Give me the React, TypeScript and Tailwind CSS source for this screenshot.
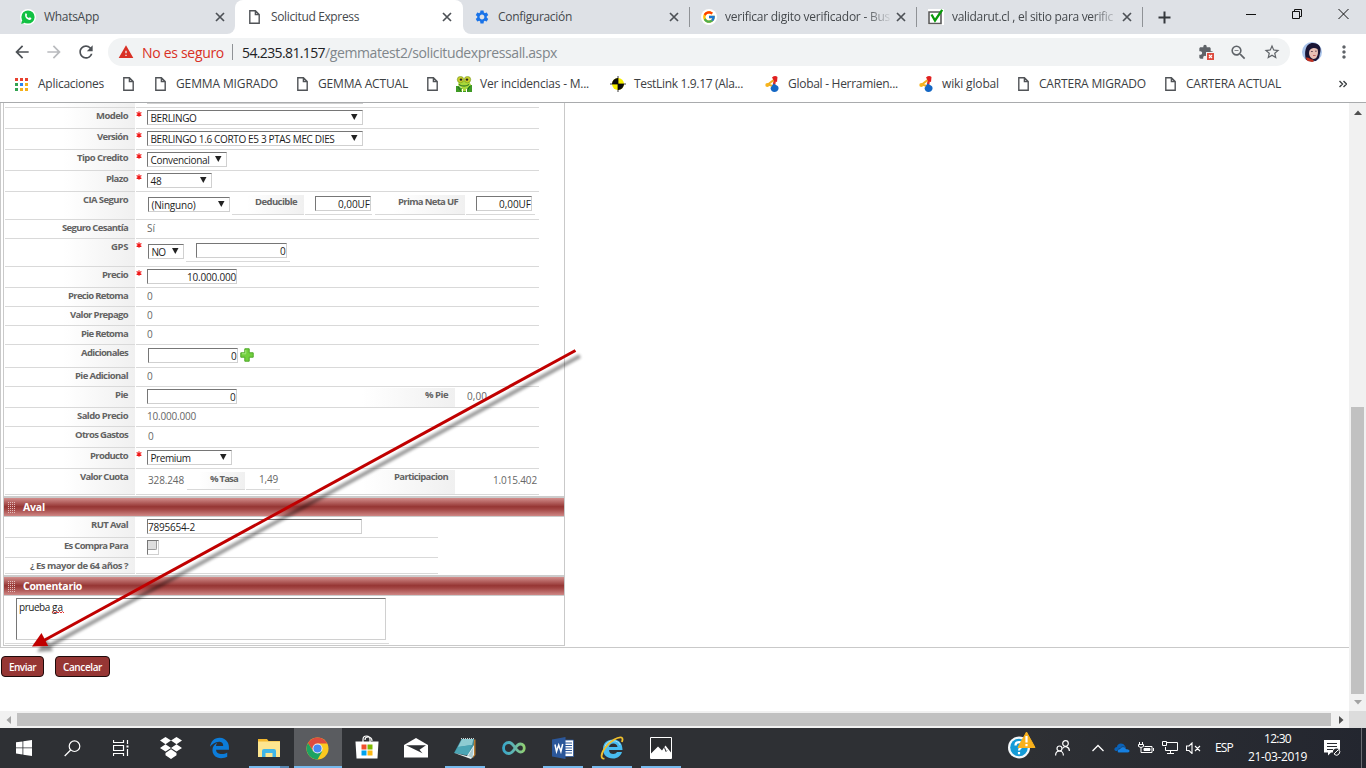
import React, { useLayoutEffect, useRef, useState } from 'react';
import { FcGoogle } from 'react-icons/fc';
import { FaEdgeLegacy } from 'react-icons/fa';
import {
  MdSettings,
  MdArrowBack,
  MdArrowForward,
  MdRefresh,
  MdWarning,
  MdExtension,
  MdZoomOut,
  MdStarBorder,
  MdMoreVert,
} from 'react-icons/md';

/* Text whose letter spacing is adjusted so that it takes up w pixels. */
function Fit({ w, className = '', children }: { w: number; className?: string; children: string }) {
  const ref = useRef<HTMLSpanElement>(null);
  const [spacing, setSpacing] = useState(0);
  useLayoutEffect(() => {
    const el = ref.current;
    if (!el) return;
    const natural = el.getBoundingClientRect().width;
    setSpacing((w - natural) / children.length);
  }, []);
  return (
    <span ref={ref} className={`inline-block shrink-0 whitespace-pre ${className}`} style={{ letterSpacing: `${spacing}px` }}>
      {children}
    </span>
  );
}

/* ---------- browser chrome ---------- */

const PageIcon = ({ className = '' }: { className?: string }) => (
  <svg viewBox="0 0 11 14" className={`h-[14px] w-[11px] shrink-0 ${className}`} fill="none" stroke="#505357" strokeWidth="1.4">
    <path d="M.8.7h5.6l3.8 3.8v8.8H.8zM6.4.7v3.8h3.8" />
  </svg>
);

const WhatsIcon = () => (
  <span className="flex h-4 w-4 items-center justify-center rounded-full bg-white">
    <svg viewBox="0 0 14 14" className="h-[14px] w-[14px]">
      <path fill="#12c143" d="m.2 14 1-4 2.800 2.800z" />
      <circle cx="7" cy="7" r="6.600" fill="#12c143" />
      <path fill="#fff" d="M4.300 3.600q.8-.7 1.300.2l.5 1.200-.6.900q.8 1.500 2.400 2.200l.8-.8 1.700.8q.2 1.600-1.500 1.900C6 10.200 3.300 7 4.300 3.600z" />
    </svg>
  </span>
);

const CheckIcon = () => (
  <svg viewBox="0 0 16 16" className="h-4 w-4">
    <path fill="#fff" d="M0 0h16v16H0z" />
    <path fill="none" stroke="#5a5a5a" strokeWidth="1.600" d="M1 3h12v11.500H1z" />
    <path fill="none" stroke="#0a9a0a" strokeWidth="2.300" d="M3.500 5.500 7 11.500 14.200.8" />
  </svg>
);

const CloseIcon = () => (
  <svg viewBox="0 0 14 14" className="h-[14px] w-[14px] shrink-0" fill="none" stroke="#4d5156" strokeWidth="1.700">
    <path d="m3 3 8 8M11 3l-8 8" />
  </svg>
);

function Tab({ icon, title, w, fade, className }: { icon: React.ReactNode; title: string; w: number; fade?: boolean; className: string }) {
  return (
    <div className={`flex h-[34px] shrink-0 items-center ${className}`}>
      <div className="flex w-6 shrink-0 items-center">{icon}</div>
      <div
        className={`flex-1 whitespace-nowrap text-[12px] leading-4 text-[#45494d] ${
          fade ? '[mask-image:linear-gradient(to_right,black_140px,transparent_168px)]' : ''
        }`}
      >
        <Fit w={w}>{title}</Fit>
      </div>
      <CloseIcon />
    </div>
  );
}

const WindowButtons = () => (
  <div className="ml-auto flex items-center self-start pt-[8px] pr-[17px]">
    <svg viewBox="0 0 104 12" className="h-3 w-[104px]" fill="none" stroke="#111" strokeWidth="1">
      <path d="M1 6.500h10M47.500 3.500h7v7h-7zM49.500 3.500v-2h7v7h-2M93.500 1l10 10M103.500 1l-10 10" />
    </svg>
  </div>
);

function TabStrip() {
  return (
    <div className="flex h-[34px] shrink-0 items-center bg-[#dee1e6]">
      <div className="h-[34px] w-[235px] bg-white">
        <Tab icon={<WhatsIcon />} title="WhatsApp" w={55} className="w-[235px] rounded-br-[8px] bg-[#dee1e6] pl-5 pr-[8px]" />
      </div>
      <div className="h-[34px] w-[228px] bg-[#dee1e6]">
        <div className="h-[34px] w-[228px] rounded-t-[8px] bg-white">
          <Tab icon={<PageIcon />} title="Solicitud Express" w={88} className="w-[228px] pl-[14px] pr-[9px] [&>div:first-child]:w-[22px]" />
        </div>
      </div>
      <div className="h-[34px] w-[226px] bg-white">
        <Tab icon={<MdSettings className="h-4 w-4 text-[#1a73e8]" />} title="Configuración" w={74} className="w-[226px] rounded-bl-[8px] bg-[#dee1e6] pl-[11px] pr-[8px]" />
      </div>
      <div className="h-5 w-px bg-[#8f9296]" />
      <Tab
        icon={
          <span className="flex h-4 w-4 items-center justify-center rounded-full bg-white">
            <FcGoogle className="h-[14px] w-[14px]" />
          </span>
        }
        title="verificar digito verificador - Bus"
        w={165}
        fade
        className="w-[226px] pl-[11px] pr-[8px]"
      />
      <div className="h-5 w-px bg-[#8f9296]" />
      <Tab icon={<CheckIcon />} title="validarut.cl , el sitio para verific" w={161} fade className="w-[225px] pl-[11px] pr-[8px]" />
      <div className="h-5 w-px bg-[#8f9296]" />
      <svg viewBox="0 0 13 13" className="ml-[15px] h-[13px] w-[13px]" stroke="#34383c" strokeWidth="2">
        <path d="M6.500.5v12M.5 6.500h12" />
      </svg>
      <WindowButtons />
    </div>
  );
}

const Avatar = () => (
  <svg viewBox="0 0 20 20" className="h-5 w-5">
    <defs>
      <clipPath id="avatar">
        <circle cx="10" cy="10" r="10" />
      </clipPath>
    </defs>
    <g clipPath="url(#avatar)">
      <path fill="#a9c3ea" d="M0 0h20v20H0z" />
      <path fill="#1a1535" d="M4 18C2 11 3 1 11 1c6 0 8 4 7.500 8L17 16l-3 3z" />
      <path fill="#e8bfb4" d="M7.500 8.500C9 6 12 5 15.500 7c1 3 .5 6-1 8.500-2 2.500-5 1.500-6.500-1-1.200-2-1.200-4-.5-6z" />
      <path fill="#c2301f" d="M4 15.500c3-.5 4 2 7 2l1 2.500H5z" />
      <path fill="#b2444a" d="M11 13.300h2.600v.8H11z" />
      <path fill="#43293a" d="M9 9h1.800v.8H9zM13 8.800h1.700v.8H13z" />
    </g>
  </svg>
);

function Toolbar() {
  return (
    <div className="flex h-[36px] shrink-0 items-center bg-white">
      <MdArrowBack className="ml-[12px] h-5 w-5 text-[#4d5156]" />
      <MdArrowForward className="ml-[12px] h-5 w-5 text-[#b9bbbe]" />
      <MdRefresh className="ml-[12px] h-5 w-5 text-[#4d5156]" />
      <div className="ml-[12px] flex h-7 w-[1182px] items-center rounded-full bg-[#f1f3f4] pl-[10px] text-[14px]">
        <MdWarning className="h-4 w-4 text-[#d93025]" />
        <Fit w={82} className="ml-[8px] text-[#d93025]">No es seguro</Fit>
        <div className="ml-[8px] mr-[9px] h-4 w-px bg-[#8f9296]" />
        <Fit w={83} className="text-[#202124]">54.235.81.157</Fit>
        <Fit w={232} className="text-[#80868b]">/gemmatest2/solicitudexpressall.aspx</Fit>
        <div className="ml-auto mr-[9px] flex items-center gap-[15px]">
          <div className="relative h-4 w-4">
            <MdExtension className="h-4 w-4 text-[#5f6368]" />
            <svg viewBox="0 0 9 9" className="absolute left-[8px] top-[8px] h-[9px] w-[9px]">
              <path fill="#f1f3f4" d="M0 0h9v9H0z" />
              <path fill="#dd4b3e" d="M1 1h7v7H1z" />
              <path stroke="#fff" strokeWidth="1.100" d="m3 3 3 3M6 3 3 6" />
            </svg>
          </div>
          <MdZoomOut className="h-[19px] w-[19px] text-[#5f6368]" />
          <MdStarBorder className="h-[18px] w-[18px] text-[#5f6368]" />
        </div>
      </div>
      <div className="ml-[12px]"><Avatar /></div>
      <MdMoreVert className="ml-[12px] h-5 w-5 text-[#5f6368]" />
    </div>
  );
}

const AppsIcon = () => (
  <svg viewBox="0 0 13 13" className="h-[13px] w-[13px]">
    <path fill="#e8412f" d="M0 0h3v3H0zM5 0h3v3H5zM10 0h3v3h-3z" />
    <path fill="#33a352" d="M0 5h3v3H0zM0 10h3v3H0z" />
    <path fill="#2a83f0" d="M5 5h3v3H5z" />
    <path fill="#f5b01a" d="M10 5h3v3h-3zM5 10h3v3H5zM10 10h3v3h-3z" />
  </svg>
);

const FrogIcon = () => (
  <svg viewBox="0 0 16 16" className="h-4 w-4">
    <path fill="#3f9a26" d="M0 10h3l2 2h6l2-3h3v7H0z" />
    <path fill="#a9d83a" d="M3 5h10l2 4-4 3 1 3H5l1-3-4-3z" />
    <circle cx="4.500" cy="3.600" r="3.200" fill="#c9cc2a" stroke="#6f9a20" strokeWidth=".6" />
    <circle cx="11.500" cy="3.600" r="3.200" fill="#c9cc2a" stroke="#6f9a20" strokeWidth=".6" />
    <circle cx="5" cy="3.600" r="1.200" fill="#222" />
    <circle cx="11" cy="3.600" r="1.200" fill="#222" />
    <path stroke="#1d6a22" fill="none" d="M3 8.500c3 2 7 2 10 0M2 11l3 4M14 10l-3 5" />
    <path fill="#fff" d="M6 13h1v3H6zM10 13h1v3h-1z" />
  </svg>
);

const TestLinkIcon = () => (
  <svg viewBox="0 0 16 16" className="h-4 w-4">
    <circle cx="8" cy="8" r="6" fill="#f6ef00" />
    <path fill="#0b0b0b" d="M8 8V2a6 6 0 0 0-6 6zM8 8v6a6 6 0 0 0 6-6z" />
    <path stroke="#0b0b0b" strokeWidth=".8" d="M8 0v16M0 8h16" />
  </svg>
);

const GlobalIcon = () => (
  <svg viewBox="0 0 14 16" className="h-4 w-[14px]">
    <path fill="none" stroke="#e03020" strokeWidth="2.500" d="m10 3-1 6" />
    <path fill="none" stroke="#f0b020" strokeWidth="2" d="M10 3 3 8.500l6 2" />
    <path fill="#e02020" d="M7 1.500Q10-1 12.500 1L12 6 9 5z" />
    <circle cx="2.300" cy="9" r="2" fill="#f7b51e" />
    <path fill="#1467c4" d="M8.500 7.500 11 9q3 1 2.500 4-1 3-4 3-3.500 0-4-4z" />
  </svg>
);

function Bookmarks() {
  return (
    <div className="flex h-[33px] shrink-0 items-center border-b border-[#a9abad] bg-white pb-[4px] text-[12px] leading-4 text-[#3c4043]">
      <div className="ml-[15px]"><AppsIcon /></div>
      <Fit w={66} className="ml-[10px]">Aplicaciones</Fit>
      <PageIcon className="ml-[19px]" />
      <PageIcon className="ml-[21px]" />
      <Fit w={102} className="ml-[10px]">GEMMA MIGRADO</Fit>
      <PageIcon className="ml-[19px]" />
      <Fit w={90} className="ml-[10px]">GEMMA ACTUAL</Fit>
      <PageIcon className="ml-[19px]" />
      <div className="ml-[18px]"><FrogIcon /></div>
      <Fit w={109} className="ml-[8px]">Ver incidencias - M...</Fit>
      <div className="ml-[21px]"><TestLinkIcon /></div>
      <Fit w={109} className="ml-[8px]">TestLink 1.9.17 (Ala...</Fit>
      <div className="ml-[22px]"><GlobalIcon /></div>
      <Fit w={110} className="ml-[9px]">Global - Herramien...</Fit>
      <div className="ml-[21px]"><GlobalIcon /></div>
      <Fit w={57} className="ml-[9px]">wiki global</Fit>
      <PageIcon className="ml-[19px]" />
      <Fit w={107} className="ml-[10px]">CARTERA MIGRADO</Fit>
      <PageIcon className="ml-[19px]" />
      <Fit w={95} className="ml-[10px]">CARTERA ACTUAL</Fit>
      <svg viewBox="0 0 8 8" className="ml-auto mr-[19px] h-2 w-2" fill="none" stroke="#3c4043" strokeWidth="1.400">
        <path d="m.5 1 3 3-3 3M4.500 1l3 3-3 3" />
      </svg>
    </div>
  );
}

/* ---------- form ---------- */

const Required = () => (
  <svg viewBox="0 0 6 6" className="mt-[3px] h-[6px] w-[6px] shrink-0" stroke="#f01818" strokeWidth="1.100">
    <path d="M3 .3v5.400M.6 1.600l4.800 2.800M5.400 1.600.6 4.400" />
  </svg>
);

function Row({ label, lw, h, required, children, lineW = 'w-[403px]' }: {
  label: string; lw: number; h: string; required?: boolean; children?: React.ReactNode; lineW?: string;
}) {
  return (
    <div className={`ml-px flex shrink-0 gap-px ${h}`}>
      <div className="w-[130px] border-b border-[#d9d9d9] bg-[linear-gradient(to_right,#fff_45%,#f0f0f0)] pr-[7px] text-right text-[9.5px] font-bold leading-[16px] text-[#636363]">
        <Fit w={lw}>{label}</Fit>
      </div>
      <div className={`flex items-start border-b border-[#d9d9d9] text-[#666] ${lineW}`}>
        <div className="w-[11px] shrink-0">{required && <Required />}</div>
        {children}
      </div>
    </div>
  );
}

const inset = 'border border-t-[#767676] border-l-[#767676] border-b-[#d0d0d0] border-r-[#d0d0d0] bg-white';

function Select({ text, w, className }: { text: string; w: number; className: string }) {
  return (
    <div className={`flex h-[15px] shrink-0 items-center justify-between pl-[2.5px] pr-[4px] leading-[13px] text-[#1c1c1c] ${inset} ${className}`}>
      <Fit w={w} className="pt-px">{text}</Fit>
      <svg viewBox="0 0 8 8" className="-mt-px h-2 w-2 shrink-0" fill="#222">
        <path d="M1 1h6.500L4.300 7z" />
      </svg>
    </div>
  );
}

function Input({ text, w, className, left }: { text: string; w: number; className: string; left?: boolean }) {
  return (
    <div className={`flex h-[15px] shrink-0 items-center leading-[13px] text-[#1c1c1c] ${left ? '' : 'justify-end'} ${inset} ${className}`}>
      <Fit w={w} className="pt-px">{text}</Fit>
    </div>
  );
}

function SubLabel({ text, w, className }: { text: string; w: number; className: string }) {
  return (
    <div className={`shrink-0 border-b border-[#d9d9d9] bg-[linear-gradient(to_right,#fff_20%,#f0f0f0)] pr-[7px] text-right text-[9.5px] font-bold text-[#636363] ${className}`}>
      <Fit w={w}>{text}</Fit>
    </div>
  );
}

const Value = ({ text, w, className = 'leading-[17px]' }: { text: string; w: number; className?: string }) => (
  <Fit w={w} className={className}>{text}</Fit>
);

function SectionHeader({ title, w }: { title: string; w: number }) {
  return (
    <div className="flex h-[21px] shrink-0 items-center border-t-2 border-b border-[#cccccc] bg-[linear-gradient(to_bottom,#d28e8c,#963634_48%,#a24543_62%,#cf8785)] pl-[4px]">
      <svg viewBox="0 0 8 11" className="h-[11px] w-2" fill="#e3bdbc">
        {[0, 2, 4, 6].map((x) => [0, 2, 4, 6, 8, 10].map((y) => <rect key={`${x}-${y}`} x={x} y={y} width="1" height="1" />))}
      </svg>
      <Fit w={w} className="ml-[7px] -mt-px text-[10.500px] font-bold leading-4 text-white">{title}</Fit>
    </div>
  );
}

const Plus = () => (
  <svg viewBox="0 0 14 14" className="mt-[3px] ml-[2px] h-[14px] w-[14px] shrink-0">
    <path fill="#72d03e" stroke="#4fa82a" d="M4.800.8h4.400v4h4v4.400h-4v4H4.800v-4h-4V4.800h4z" />
    <path fill="none" stroke="#a5e881" d="M5.800 5.500v-3.500M2 5.800h4" />
  </svg>
);

function FormPanel() {
  return (
    <div className="ml-[2px] flex h-[543px] w-[562px] flex-col border-b border-l border-r border-[#c9c9c9] text-[10px]">
      <div className="ml-px flex h-[5px] shrink-0 gap-px">
        <div className="w-[130px] border-b border-[#d9d9d9] bg-[linear-gradient(to_right,#fff_40%,#f0f0f0)]" />
        <div className="w-[403px] border-b border-[#d9d9d9] pl-[11px]">
          <div className="h-px w-[216px] bg-[#d0d0d0]" />
        </div>
      </div>
      <Row label="Modelo" lw={32} h="h-[21px]" required>
        <Select text="BERLINGO" w={46} className="mt-[2px] w-[216px]" />
      </Row>
      <Row label="Versión" lw={31} h="h-[21px]" required>
        <Select text="BERLINGO 1.6 CORTO E5 3 PTAS MEC DIES" w={184} className="mt-[2px] w-[216px]" />
      </Row>
      <Row label="Tipo Credito" lw={51} h="h-[21px]" required>
        <Select text="Convencional" w={59} className="mt-[2px] w-[80px]" />
      </Row>
      <Row label="Plazo" lw={22} h="h-[21px]" required>
        <Select text="48" w={11} className="mt-[2px] w-[65px]" />
      </Row>
      <Row label="CIA Seguro" lw={45} h="h-[28px]">
        <Select text="(Ninguno)" w={44} className="ml-px mt-[5px] w-[82px]" />
        <SubLabel text="Deducible" w={42} className="ml-[2px] mt-[3px] h-5 w-[72px] leading-[14px]" />
        <div className="ml-px mt-[3px] h-5 w-[67px] border-b border-[#d9d9d9] pl-[10px]">
          <Input text="0,00UF" w={32} className="mt-px w-[56px]" />
        </div>
        <SubLabel text="Prima Neta UF" w={60} className="ml-[3px] mt-[3px] h-5 w-[90px] leading-[14px]" />
        <div className="ml-px mt-[3px] h-5 w-[69px] border-b border-[#d9d9d9] pl-[10px]">
          <Input text="0,00UF" w={32} className="mt-px w-[56px]" />
        </div>
      </Row>
      <Row label="Seguro Cesantía" lw={66} h="h-[19px]">
        <Value text="Sí" w={8} />
      </Row>
      <Row label="GPS" lw={17} h="h-[28px]" required>
        <Select text="NO" w={14} className="ml-px mt-[5px] w-[36px]" />
        <div className="ml-[2px] mt-[3px] h-5 w-[104px] border-b border-[#d9d9d9] pl-[10px]">
          <Input text="0" w={6} className="mt-px w-[91px]" />
        </div>
      </Row>
      <Row label="Precio" lw={26} h="h-[21px]" required>
        <Input text="10.000.000" w={49} className="mt-[2px] w-[90px]" />
      </Row>
      <Row label="Precio Retoma" lw={60} h="h-[19px]"><Value text="0" w={6} /></Row>
      <Row label="Valor Prepago" lw={58} h="h-[19px]"><Value text="0" w={6} /></Row>
      <Row label="Pie Retoma" lw={47} h="h-[19px]"><Value text="0" w={6} /></Row>
      <Row label="Adicionales" lw={47} h="h-[23px]">
        <Input text="0" w={6} className="ml-px mt-[3px] w-[90px]" />
        <Plus />
      </Row>
      <Row label="Pie Adicional" lw={53} h="h-[19px]"><Value text="0" w={6} /></Row>
      <Row label="Pie" lw={13} h="h-[21px]">
        <Input text="0" w={6} className="mt-[2px] w-[90px]" />
        <SubLabel text="% Pie" w={23} className="ml-[102px] mt-px h-5 w-[116px] leading-[14px]" />
        <Value text="0,00" w={20} className="ml-[12px] leading-[18px]" />
      </Row>
      <Row label="Saldo Precio" lw={51} h="h-[19px]"><Value text="10.000.000" w={49} /></Row>
      <Row label="Otros Gastos" lw={53} h="h-[21px]"><Value text="0" w={6} className="ml-px leading-[19px]" /></Row>
      <Row label="Producto" lw={38} h="h-[21px]" required>
        <Select text="Premium" w={40} className="mt-[2px] w-[85px]" />
      </Row>
      <Row label="Valor Cuota" lw={48} h="h-[26px]">
        <Value text="328.248" w={36} className="ml-px leading-[23px]" />
        <SubLabel text="% Tasa" w={28} className="ml-[3px] mt-[3px] h-[18px] w-[58px] leading-[14px]" />
        <div className="ml-px mt-[3px] h-[18px] w-[34px] border-b border-[#d9d9d9] pl-[13px]">
          <Value text="1,49" w={19} className="leading-[15px]" />
        </div>
        <SubLabel text="Participacion" w={54} className="ml-[59px] mt-px h-[25px] w-[116px] leading-[14px]" />
        <Value text="1.015.402" w={44} className="ml-[38px] leading-[23px]" />
      </Row>
      <div className="h-px shrink-0" />
      <SectionHeader title="Aval" w={22} />
      <Row label="RUT Aval" lw={37} h="h-[21px]" lineW="w-[302px]">
        <Input text="7895654-2" w={47} left className="mt-[2px] w-[215px]" />
      </Row>
      <Row label="Es Compra Para" lw={64} h="h-[20px]" lineW="w-[302px]">
        <div className={`mt-[2px] h-[15px] w-3 ${inset}`}>
          <div className="h-[9px] w-[9px] rounded-br-[2px] border-b border-r border-[#9c9c9c] bg-[#dedede]" />
        </div>
      </Row>
      <Row label="¿ Es mayor de 64 años ?" lw={98} h="h-[16px]" lineW="w-[302px]" />
      <div className="h-px shrink-0" />
      <SectionHeader title="Comentario" w={59} />
      <div className="ml-px h-[48px] w-[384px] shrink-0 border-b border-[#d9d9d9] pl-[11px] pt-[2px]">
        <div className={`flex h-[42px] w-[370px] items-start pl-[2px] leading-[16px] text-[#1c1c1c] ${inset}`}>
          <Fit w={33}>prueba </Fit>
          <div className="relative">
            <Fit w={11}>ga</Fit>
            <svg viewBox="0 0 12 3" className="absolute left-0 top-[12px] h-[3px] w-3" fill="none" stroke="#e23030">
              <path d="m0 2 1.500-1.500L3 2 4.500.5 6 2 7.500.5 9 2l1.500-1.500L12 2" />
            </svg>
          </div>
        </div>
      </div>
    </div>
  );
}

const Button = ({ text, w, className }: { text: string; w: number; className: string }) => (
  <button className={`flex h-[21px] items-center justify-center rounded-[4px] border-[1.500px] border-[#1d0b0b] bg-[#963634] text-[10px] font-semibold leading-4 text-white ${className}`}>
    <Fit w={w}>{text}</Fit>
  </button>
);

const Arrow = () => (
  <svg viewBox="0 0 600 320" className="pointer-events-none absolute left-0 top-[340px] h-[320px] w-[600px]">
    <defs>
      <filter id="soft" x="-5%" y="-5%" width="110%" height="110%">
        <feGaussianBlur stdDeviation="1.700" />
      </filter>
    </defs>
    <g filter="url(#soft)" opacity=".4" transform="translate(5 5)">
      <path stroke="#000" strokeWidth="4" d="M575 11 44 301" />
      <path d="m32 307 9-14 7 13z" />
    </g>
    <path stroke="#c00000" strokeWidth="3" d="M575.500 10.500 42 301.500" />
    <path fill="#c00000" d="m32 306.500 9.500-13.500 6.700 13z" />
  </svg>
);

function Viewport() {
  return (
    <div className="flex h-[608px] shrink-0 bg-white">
      <div className="w-[1349px]">
        <div className="h-[545px] border-b border-l border-[#c9c9c9]">
          <FormPanel />
        </div>
        <div className="ml-px mt-[8px] flex gap-[11px]">
          <Button text="Enviar" w={27} className="w-[43px]" />
          <Button text="Cancelar" w={39} className="w-[55px]" />
        </div>
      </div>
      <div className="flex w-[17px] flex-col items-center bg-[#f1f1f1]">
        <svg viewBox="0 0 8 5" className="mt-[7px] h-[5px] w-2" fill="#505050"><path d="M0 5h8L4 .5z" /></svg>
        <div className="mt-[292px] h-[287px] w-[13px] bg-[#c1c1c1]" />
        <svg viewBox="0 0 8 5" className="mt-[6px] h-[5px] w-2" fill="#a3a3a3"><path d="M0 0h8L4 4.500z" /></svg>
      </div>
    </div>
  );
}

const HScroll = () => (
  <div className="flex h-[17px] shrink-0 bg-[#dcdcdc]">
    <div className="flex w-[1349px] items-center bg-[#f1f1f1]">
      <svg viewBox="0 0 5 8" className="ml-[6px] h-2 w-[5px]" fill="#a3a3a3"><path d="M5 0v8L.5 4z" /></svg>
      <div className="ml-[6px] h-[13px] w-[1314px] bg-[#c1c1c1]" />
      <svg viewBox="0 0 5 8" className="ml-[8px] h-2 w-[5px]" fill="#505050"><path d="M0 0v8l4.500-4z" /></svg>
    </div>
  </div>
);

/* ---------- taskbar ---------- */

function Task({ children, bar, active, className = 'w-[49px]' }: { children: React.ReactNode; bar?: string; active?: boolean; className?: string }) {
  return (
    <div className={`flex h-10 shrink-0 flex-col items-center ${className}`}>
      <div className={`flex h-[38px] items-center justify-center pt-[2px] ${active ? 'w-12 bg-[#5a5c60]' : 'w-full'}`}>{children}</div>
      {bar && <div className={`h-[2px] bg-[#76b9ed] ${bar}`} />}
    </div>
  );
}

const StartIcon = () => (
  <svg viewBox="0 0 16 16" className="h-4 w-4" fill="#fff">
    <path d="M0 2.300 6.500 1.400v6.100H0zM7.300 1.300 16 0v7.500H7.300zM0 8.300h6.500v6.200L0 13.600zM7.300 8.300H16V16l-8.700-1.300z" />
  </svg>
);
const SearchIcon = () => (
  <svg viewBox="0 0 17 17" className="h-[17px] w-[17px]" fill="none" stroke="#fff" strokeWidth="1.200">
    <circle cx="10.500" cy="6.200" r="5.300" />
    <path d="M6.700 10 .7 16" />
  </svg>
);
const TaskViewIcon = () => (
  <svg viewBox="0 0 16 16" className="h-4 w-4" fill="none" stroke="#fff" strokeWidth="1.200">
    <path d="M.5 0v2.500h10V0M.5 16v-2.500h10V16M.5 5.500h10v5H.5zM14.500 0v4M14.500 9v7" />
    <path strokeWidth="2" d="M13.500 6.500h2" />
  </svg>
);
const DropboxIcon = () => (
  <svg viewBox="0 0 24 22" className="h-[22px] w-6" fill="#fff">
    <path d="M6.500 0 12 3.600 6.500 7.200 1 3.600zM17.500 0 23 3.600l-5.500 3.600L12 3.600zM6.500 7.300l5.500 3.600-5.500 3.600L1 10.900zM17.500 7.300 23 10.900l-5.500 3.600-5.500-3.600zM6.500 15.900 12 12.300l5.500 3.600v2.400L12 22l-5.500-3.700z" />
  </svg>
);
const FolderIcon = () => (
  <svg viewBox="0 0 22 18" className="h-[18px] w-[22px]">
    <path fill="#f4b82e" d="M0 0h9l1.500 2H22v4H0z" />
    <path fill="#fde58f" d="M0 2.500h22V18H0z" />
    <path fill="#3fb6e8" d="M4 18v-6q0-2 2-2h10q2 0 2 2v6h-3.500v-4h-7v4z" />
  </svg>
);
const ChromeIcon = () => (
  <svg viewBox="0 0 48 48" className="h-[23px] w-[23px]">
    <circle cx="24" cy="24" r="23" fill="#fbc91f" />
    <path fill="#dd4b3e" d="M4.100 12.500A23 23 0 0 1 43.900 12.500L44 13.500H24L15 29.500z" />
    <path fill="#1da362" d="M4.100 12.500A23 23 0 0 0 24 47l10-17.500H15z" />
    <circle cx="24" cy="24" r="10.500" fill="#f3f3f3" />
    <circle cx="24" cy="24" r="8.500" fill="#4688f1" />
  </svg>
);
const StoreIcon = () => (
  <svg viewBox="0 0 24 24" className="-mt-[2px] h-6 w-6">
    <path fill="none" stroke="#fff" strokeWidth="1.200" d="M8 7V4.500q0-3.500 3.500-3.500T15 4.500V7M10 5q0-3 3-3 4 0 4 4" />
    <path fill="#fff" d="M.5 6.500h23L22.500 23.500h-21z" />
    <path fill="#f0502d" d="M6.500 9.500h5v5h-5z" /><path fill="#7eb900" d="M12.500 9.500h5v5h-5z" />
    <path fill="#00a3ee" d="M6.500 15.500h5v5h-5z" /><path fill="#fdb813" d="M12.500 15.500h5v5h-5z" />
  </svg>
);
const MailIcon = () => (
  <svg viewBox="0 0 24 20" className="-mt-px h-5 w-6">
    <path fill="#fff" d="M0 7 12 0l12 7v12.500H0z" />
    <path fill="#2d2f33" d="M2 7.300h20l-6.500 4.500 3 3.500z" />
  </svg>
);
const NotepadIcon = () => (
  <svg viewBox="0 0 24 24" className="-mt-px h-6 w-6">
    <path fill="#b47a30" d="M20.500 3.500h2V19l-2.500 3z" />
    <path fill="#3f93a4" d="M8.500 3h12.500l-1 17-8-1L1 17z" />
    <path fill="#8ecbd2" d="M9 3h11.500l-1.500 6L5 11z" />
    <path fill="#4ba5b5" d="M5 11 18 9l-2 10L1.500 17z" />
    <path fill="#e9f2f2" d="M1.500 17 14 20l7-11v10l-3 4z" />
    <path fill="#a9c9cf" d="m15 20 5.500-9-1 11z" />
    <path stroke="#cfd6d6" strokeDasharray="1 1" d="M8 2.500h13" />
  </svg>
);
const InfinityIcon = () => (
  <svg viewBox="0 0 24 14" className="h-[14px] w-6" fill="none" strokeWidth="2.800">
    <defs>
      <linearGradient id="loop"><stop offset="0" stopColor="#39a7c8" /><stop offset=".55" stopColor="#67b8ad" /><stop offset="1" stopColor="#90cf72" /></linearGradient>
    </defs>
    <path stroke="url(#loop)" d="M7 1.500C-.3 1.500-.3 12.500 7 12.500 12.500 12.500 13 3 18.500 3c5 0 5 8 0 8C13.500 11 12 1.500 7 1.500z" />
  </svg>
);
const WordIcon = () => (
  <svg viewBox="0 0 22 22" className="h-[22px] w-[22px]">
    <path fill="#fff" stroke="#2b579a" strokeWidth=".8" d="M11 3h10.500v16.500H11z" />
    <path stroke="#2b579a" strokeWidth="1.200" d="M13 6h7M13 8.500h7M13 11h7M13 13.500h7M13 16h7" />
    <path fill="#2b579a" d="M0 2.500 13.500 0v22L0 19.500z" />
    <path fill="none" stroke="#fff" strokeWidth="1.500" d="m3 7.500 1.500 7 2.200-6.500 2.200 6.500 1.800-7.500" />
  </svg>
);
const IEIcon = () => (
  <svg viewBox="0 0 24 24" className="-mt-px h-6 w-6">
    <path fill="#49bdf0" fillRule="evenodd" d="M13 3.500c6 0 9.500 4 9.500 10.500H9c.3 3 2 4 4.300 4 1.800 0 3-.7 3.700-2h5c-1.300 4-4.500 6.500-9 6.500C7 22.500 3 19 3 13S7.300 3.500 13 3.500zM9 11h8.500c-.3-2.300-1.800-3.500-4.200-3.500S9.500 8.800 9 11z" />
    <path fill="none" stroke="#a8e4fb" d="M5 10.500c1-3.500 4-5.800 8-5.800 3.500 0 6 1.500 7.200 4.300" />
    <path fill="none" stroke="#f2c12c" strokeWidth="1.800" d="M4.500 22.500C.5 23.500.5 18 5 12 10 5 18 .5 21.500 1.500c1.500.7 1.200 2.500.4 4.500" />
  </svg>
);
const PhotosIcon = () => (
  <svg viewBox="0 0 22 22" className="h-[22px] w-[22px]">
    <path fill="#2a2c2f" stroke="#fff" strokeWidth="1" d="M.5.5h21v21H.5z" />
    <path fill="#fff" d="M1 16.500 8 9.500l4 4 3.500-5L21 15.500V21H1z" />
    <path stroke="#26282b" d="m14.500 10.500 1.500 4 1-1" fill="none" />
  </svg>
);

const HelpIcon = () => (
  <svg viewBox="0 0 30 30" className="h-[30px] w-[30px]">
    <circle cx="12" cy="17.500" r="11" fill="#f4f8fa" />
    <circle cx="12" cy="17.500" r="8.800" fill="#149bd7" />
    <path fill="none" stroke="#fff" strokeWidth="2.200" d="M8.500 15.500c0-4.500 7.500-4.500 7 0-.3 2.300-3.500 2-3.500 5M12 22v2.300" />
    <path fill="#f9b11b" stroke="#f9b11b" strokeLinejoin="round" d="m19.500 2 8.500 15.500H11z" />
    <path stroke="#fff" strokeWidth="2.200" d="M19.500 6v6.500M19.500 14v2.200" />
  </svg>
);

function Taskbar() {
  return (
    <div className="flex h-10 shrink-0 bg-[linear-gradient(to_right,#2e3034_75%,#23262f)] text-white">
      <Task className="w-12"><StartIcon /></Task>
      <Task className="w-12"><SearchIcon /></Task>
      <Task className="w-[50px]"><TaskViewIcon /></Task>
      <Task><DropboxIcon /></Task>
      <Task><FaEdgeLegacy className="h-[22px] w-[21px] text-[#0c7cd9]" /></Task>
      <Task bar="w-10 border-r-[9px] border-[#5787b2]"><FolderIcon /></Task>
      <Task active bar="w-12"><ChromeIcon /></Task>
      <Task><StoreIcon /></Task>
      <Task><MailIcon /></Task>
      <Task bar="w-10"><NotepadIcon /></Task>
      <Task><InfinityIcon /></Task>
      <Task bar="w-10"><WordIcon /></Task>
      <Task bar="w-10"><IEIcon /></Task>
      <Task bar="w-10"><PhotosIcon /></Task>
      <div className="ml-auto flex h-10 items-center">
        <div className="-mt-[6px] mr-[18px]"><HelpIcon /></div>
        <svg viewBox="0 0 15 16" className="mr-[22px] h-4 w-[15px]" fill="none" stroke="#fff" strokeWidth="1.200">
          <circle cx="4.500" cy="8.500" r="2.500" /><path d="M.6 15.500c0-6 7.800-6 7.800 0" />
          <circle cx="10.500" cy="3.500" r="2.800" /><path d="M7.500 8.500c2-3 6.800-2 6.900 2.500" />
        </svg>
        <svg viewBox="0 0 12 8" className="mr-[10px] h-2 w-3" fill="none" stroke="#fff" strokeWidth="1.300"><path d="m.5 7 5.500-5.500L11.500 7" /></svg>
        <svg viewBox="0 0 16 10" className="mr-[8px] h-[10px] w-4">
          <path fill="#0a62b8" d="M3 8C-1 8 0 4 3 4c0-4 6-5 8-1l1 2-4 4z" />
          <path fill="#1680e2" stroke="#25282e" strokeWidth=".5" d="M4 9.800C2.500 7 4.500 5.500 6 6c.7-3 5.300-3 6.200 0 4-.5 4.700 3.300 1.800 3.800z" />
        </svg>
        <svg viewBox="0 0 16 12" className="mr-[8px] h-3 w-4" fill="none" stroke="#fff">
          <path d="M1.500 0v2.500M4.500 0v2.500M.5 2.500h5v2q-2.500 2-5 0zM3 5.500v5h11v-6H6.500M15.500 6v3" />
          <path fill="#fff" d="M6 6.500h6v2H6z" />
        </svg>
        <svg viewBox="0 0 16 14" className="mr-[8px] h-[14px] w-4" fill="none" stroke="#fff">
          <path d="M5 1.500h10.500v8H3.500V6M.5.500h4v4h-4zM5 12.500h7M8.500 9.500v3" />
        </svg>
        <svg viewBox="0 0 15 12" className="mr-[14px] h-3 w-[15px]" fill="none" stroke="#fff" strokeWidth="1.100">
          <path d="M.5 4h2.500L6 1v10.500L3 8.500H.5zM9 4l5 5M14 4 9 9" />
        </svg>
        <Fit w={18} className="text-[12px] leading-4">ESP</Fit>
        <div className="ml-[15px] flex w-[59px] flex-col items-center pb-px text-[12px] leading-[18px]">
          <Fit w={27}>12:30</Fit>
          <Fit w={59}>21-03-2019</Fit>
        </div>
        <svg viewBox="0 0 17 16" className="ml-[17px] h-4 w-[17px]">
          <path fill="#fff" d="M0 0h16v12.500H7L4 15.500v-3H0z" />
          <path stroke="#282a30" d="M3 3.500h10M3 6.500h10M3 9.500h6" />
          <circle cx="12.500" cy="12" r="3.600" fill="#282a30" /><path fill="none" stroke="#fff" d="M10 14l4.500-4.500a3.200 3.200 0 1 1-4 5z" />
        </svg>
        <div className="ml-[20px] mr-[4px] h-10 w-px bg-[#6b6d73]" />
      </div>
    </div>
  );
}

export default function App() {
  return (
    <div className="relative flex h-[768px] w-[1366px] flex-col overflow-hidden bg-white font-['Open_Sans','Noto_Sans',sans-serif]">
      <TabStrip />
      <Toolbar />
      <Bookmarks />
      <Viewport />
      <HScroll />
      <Taskbar />
      <Arrow />
    </div>
  );
}
